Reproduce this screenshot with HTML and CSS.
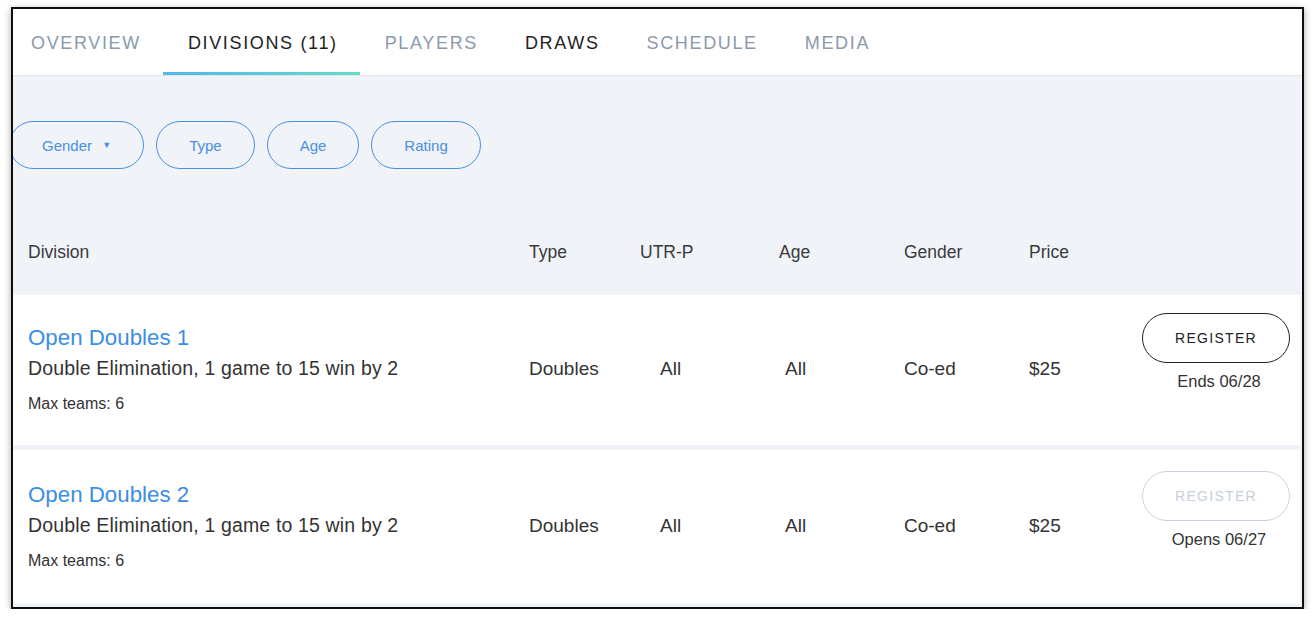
FILE: index.html
```html
<!DOCTYPE html>
<html lang="en">
<head>
<meta charset="utf-8">
<title>Divisions</title>
<link rel="stylesheet" href="styles.css">
</head>
<body>
<div class="frame">
  <nav class="tabs">
    <div class="tabs-list">
      <a class="tab">OVERVIEW</a>
      <a class="tab tab-active">DIVISIONS (11)</a>
      <a class="tab">PLAYERS</a>
      <a class="tab tab-dark">DRAWS</a>
      <a class="tab">SCHEDULE</a>
      <a class="tab">MEDIA</a>
    </div>
  </nav>
  <section class="content">
    <div class="filters">
      <button class="pill">Gender <span class="caret">&#9660;</span></button>
      <button class="pill">Type</button>
      <button class="pill">Age</button>
      <button class="pill">Rating</button>
    </div>
    <div class="grid head">
      <div>Division</div>
      <div>Type</div>
      <div>UTR-P</div>
      <div>Age</div>
      <div>Gender</div>
      <div>Price</div>
      <div></div>
    </div>
    <div class="grid row">
      <div class="division">
        <a class="div-title">Open Doubles 1</a>
        <div class="div-desc">Double Elimination, 1 game to 15 win by 2</div>
        <div class="div-max">Max teams: 6</div>
      </div>
      <div class="val">Doubles</div>
      <div class="val val-utr">All</div>
      <div class="val val-age">All</div>
      <div class="val">Co-ed</div>
      <div class="val">$25</div>
      <div class="action">
        <button class="reg">REGISTER</button>
        <div class="note">Ends 06/28</div>
      </div>
    </div>
    <div class="grid row row-last">
      <div class="division">
        <a class="div-title">Open Doubles 2</a>
        <div class="div-desc">Double Elimination, 1 game to 15 win by 2</div>
        <div class="div-max">Max teams: 6</div>
      </div>
      <div class="val">Doubles</div>
      <div class="val val-utr">All</div>
      <div class="val val-age">All</div>
      <div class="val">Co-ed</div>
      <div class="val">$25</div>
      <div class="action">
        <button class="reg reg-disabled">REGISTER</button>
        <div class="note">Opens 06/27</div>
      </div>
    </div>
  </section>
</div>
</body>
</html>
```
FILE: styles.css
```css
* { box-sizing: border-box; }
html, body { margin: 0; padding: 0; background: #fff; }
body { font-family: "Liberation Sans", Arial, sans-serif; color: #333; }

.frame {
  margin: 7px 0 0 11px;
  width: 1293px;
  height: 602px;
  border: 2px solid #0e0e0e;
  box-shadow: 0 2px 7px rgba(0,0,0,0.35);
  background: #f0f3f8;
  overflow: hidden;
}

.tabs {
  background: #fff;
  height: 67px;
  border-bottom: 1px solid #e2e6eb;
}
.tabs-list {
  display: flex;
  margin-left: -7px;
  height: 66px;
}
.tab {
  position: relative;
  height: 66px;
  padding: 24px 22px 0 25px;
  font-size: 18px;
  line-height: 20px;
  letter-spacing: 1.65px;
  color: #8a9aab;
  white-space: nowrap;
}
.tab-active, .tab-dark { color: #1e1e1e; }
.tab-active::after {
  content: "";
  position: absolute;
  left: 0; right: 0; bottom: 0;
  height: 3px;
  background: linear-gradient(90deg, #52b6ec, #63dcc6);
}

.content { background: #f0f3f8; }

.filters {
  display: flex;
  gap: 12px;
  padding-top: 45px;
  margin-left: -4px;
}
.pill {
  height: 48px;
  padding: 0 32px;
  border: 1.5px solid #4a90e2;
  border-radius: 24px;
  background: transparent;
  color: #4a90e2;
  font-family: "Liberation Sans", Arial, sans-serif;
  font-size: 15px;
}
.caret { font-size: 9px; margin-left: 6px; vertical-align: 3px; }

.grid {
  display: grid;
  grid-template-columns: 501px 111px 139px 125px 125px 113px 1fr;
  padding-left: 15px;
}
.head {
  margin-top: 40px;
  height: 86px;
  align-items: center;
  font-size: 17.5px;
  color: #3a3a3a;
}

.row {
  background: #fff;
  height: 150px;
  margin-right: 2px;
  margin-bottom: 5px;
  align-items: center;
}
.row-last { height: 153px; }

.division { display: flex; flex-direction: column; }
.div-title {
  color: #3a8ee6;
  font-size: 22.3px;
  line-height: 24px;
  margin-bottom: 4px;
}
.div-desc {
  font-size: 19.5px;
  line-height: 28px;
  color: #333;
  letter-spacing: 0.15px;
}
.div-max {
  margin-top: 12px;
  font-size: 16px;
  line-height: 20px;
  color: #333;
}

.val { font-size: 19px; color: #333; margin-top: -2px; }
.val-utr { padding-left: 20px; }
.val-age { padding-left: 6px; }

.action {
  align-self: start;
  margin-top: 18px;
  width: 148px;
  display: flex;
  flex-direction: column;
  align-items: center;
}
.row-last .action { margin-top: 21px; }
.reg {
  width: 148px;
  height: 50px;
  border: 1px solid #222;
  border-radius: 25px;
  background: #fff;
  color: #222;
  font-family: "Liberation Sans", Arial, sans-serif;
  font-size: 14px;
  letter-spacing: 1.3px;
}
.reg-disabled { border-color: #c9d3df; color: #c6cfdb; }
.note {
  margin-top: 8px;
  padding-left: 6px;
  font-size: 16.5px;
  line-height: 20px;
  color: #333;
}
```
